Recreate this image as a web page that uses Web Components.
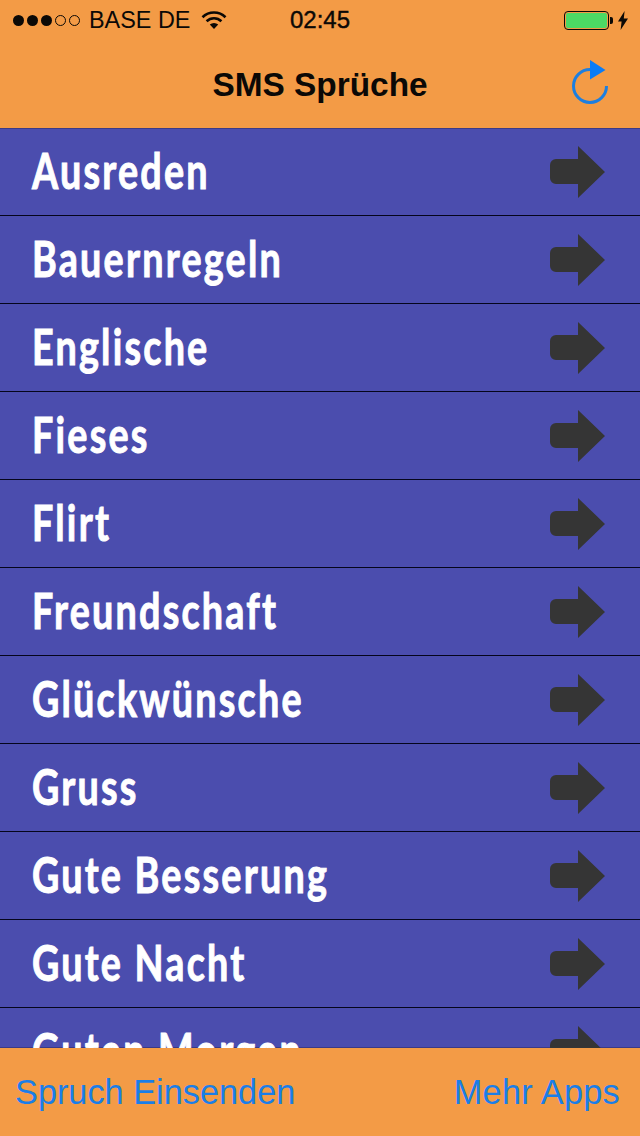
<!DOCTYPE html>
<html lang="de">
<head>
<meta charset="utf-8">
<title>SMS Sprüche</title>
<style>
  html, body { margin: 0; padding: 0; }
  body { width: 640px; height: 1136px; overflow: hidden; font-family: "Liberation Sans", Arial, sans-serif; }
</style>
</head>
<body>
<sms-app>
  <status-bar slot="top" carrier="BASE DE" time="02:45"></status-bar>
  <nav-bar slot="top">SMS Sprüche</nav-bar>
  <topic-row>Ausreden</topic-row>
  <topic-row>Bauernregeln</topic-row>
  <topic-row>Englische</topic-row>
  <topic-row>Fieses</topic-row>
  <topic-row>Flirt</topic-row>
  <topic-row>Freundschaft</topic-row>
  <topic-row>Glückwünsche</topic-row>
  <topic-row>Gruss</topic-row>
  <topic-row>Gute Besserung</topic-row>
  <topic-row>Gute Nacht</topic-row>
  <topic-row>Guten Morgen</topic-row>
  <bottom-bar slot="bottom">
    <span slot="left">Spruch Einsenden</span>
    <span slot="right">Mehr Apps</span>
  </bottom-bar>
</sms-app>

<script>
class SmsApp extends HTMLElement {
  connectedCallback() {
    this.attachShadow({ mode: 'open' });
    this.shadowRoot.innerHTML = `
      <style>
        :host { display: flex; flex-direction: column; width: 640px; height: 1136px; background: #4b4dae; }
        header { background: #f39b46; flex: none; }
        main { flex: 1; min-height: 0; overflow: hidden; box-shadow: inset 0 1px #3b3a86, inset 0 -1px #3b3a86; }
        footer { flex: none; }
      </style>
      <header><slot name="top"></slot></header>
      <main><slot></slot></main>
      <footer><slot name="bottom"></slot></footer>
    `;
  }
}

class StatusBar extends HTMLElement {
  connectedCallback() {
    this.attachShadow({ mode: 'open' });
    this.shadowRoot.innerHTML = `
      <style>
        :host { display: grid; grid-template-columns: 1fr auto 1fr; align-items: center; height: 40px; color: #0b0906; font-size: 23.400px; }
        .left { display: flex; align-items: center; padding-left: 13px; }
        .dots { display: flex; gap: 3px; margin-right: 9px; }
        .dot { width: 11px; height: 11px; border-radius: 50%; background: #0b0906; box-sizing: border-box; }
        .dot.off { background: none; border: 1px solid #0b0906; }
        .wifi { margin-left: 11px; display: block; }
        .time { font-size: 24px; -webkit-text-stroke: 0.4px #0b0906; }
        .right { display: flex; align-items: center; justify-content: flex-end; padding-right: 12px; }
        .batt { width: 45px; height: 19px; box-sizing: border-box; border: 1.5px solid #0b0906; border-radius: 4px; padding: 1px; }
        .batt i { display: block; height: 100%; background: #4cd964; border-radius: 2px; }
        .nub { width: 3px; height: 7px; background: #0b0906; border-radius: 0 2px 2px 0; margin: 0 5px 0 1px; }
      </style>
      <div class="left">
        <div class="dots">
          <span class="dot"></span><span class="dot"></span><span class="dot"></span>
          <span class="dot off"></span><span class="dot off"></span>
        </div>
        <span>${this.getAttribute('carrier')}</span>
        <svg class="wifi" width="26" height="20" viewBox="0 0 26 20" fill="none" stroke="#0b0906" stroke-width="2.6">
          <path d="M1.5 7.2a16.4 16.4 0 0 1 23 0"/>
          <path d="M5.6 11.2a10.6 10.6 0 0 1 14.8 0"/>
          <path d="M13 19l-4.2-4.4a6 6 0 0 1 8.4 0z" fill="#0b0906" stroke="none"/>
        </svg>
      </div>
      <span class="time">${this.getAttribute('time')}</span>
      <div class="right">
        <div class="batt"><i></i></div><span class="nub"></span>
        <svg width="10" height="19" viewBox="0 0 10 19"><path d="M6.6 0L0 10.6h3.6L2.6 19 10 7.6H5.8z" fill="#0b0906"/></svg>
      </div>
    `;
  }
}

class NavBar extends HTMLElement {
  connectedCallback() {
    this.attachShadow({ mode: 'open' });
    this.shadowRoot.innerHTML = `
      <style>
        :host { display: grid; grid-template-columns: 1fr auto 1fr; align-items: center; height: 88px; color: #0b0906; }
        .title { font-size: 33.400px; font-weight: 700; margin-top: 2px; }
        .action { justify-self: end; margin: -2px 31px 0 0; display: block; }
      </style>
      <span></span>
      <span class="title"><slot></slot></span>
      <svg class="action" width="38" height="46" viewBox="0 0 38 46" fill="none">
        <path d="M19 9.5a16.5 16.5 0 1 0 16.5 16.5" stroke="#1d7fe0" stroke-width="3"/>
        <path d="M19 0l15.500 10L19 19.500z" fill="#0a7cf6"/>
      </svg>
    `;
  }
}

class TopicRow extends HTMLElement {
  connectedCallback() {
    this.attachShadow({ mode: 'open' });
    this.shadowRoot.innerHTML = `
      <style>
        :host { display: flex; align-items: center; justify-content: space-between; height: 88px; box-sizing: border-box; padding: 0 35px 0 32px; border-bottom: 1px solid #05051c; color: #fff; }
        .label { display: inline-block; font: 700 41px "Lato", "Open Sans", sans-serif; letter-spacing: 2.4px; -webkit-text-stroke: 0.8px #fff; transform: translateY(-1px) scale(.92, 1.2); transform-origin: left center; white-space: nowrap; }
        svg { display: block; flex: none; }
      </style>
      <span class="label"><slot></slot></span>
      <svg width="55" height="52" viewBox="0 0 55 52">
        <path d="M28 0L55 26 28 52V38H6a6 6 0 0 1-6-6V19a6 6 0 0 1 6-6H28z" fill="#353535"/>
      </svg>
    `;
  }
}

class BottomBar extends HTMLElement {
  connectedCallback() {
    this.attachShadow({ mode: 'open' });
    this.shadowRoot.innerHTML = `
      <style>
        :host { display: flex; align-items: center; justify-content: space-between; height: 88px; box-sizing: border-box; padding: 0 20px 0 15px; background: #f39b46; color: #1a7ee8; font-size: 34.300px; }
        ::slotted([slot=right]) { letter-spacing: .25px; }
      </style>
      <slot name="left"></slot>
      <slot name="right"></slot>
    `;
  }
}

customElements.define('sms-app', SmsApp);
customElements.define('status-bar', StatusBar);
customElements.define('nav-bar', NavBar);
customElements.define('topic-row', TopicRow);
customElements.define('bottom-bar', BottomBar);
</script>
</body>
</html>
